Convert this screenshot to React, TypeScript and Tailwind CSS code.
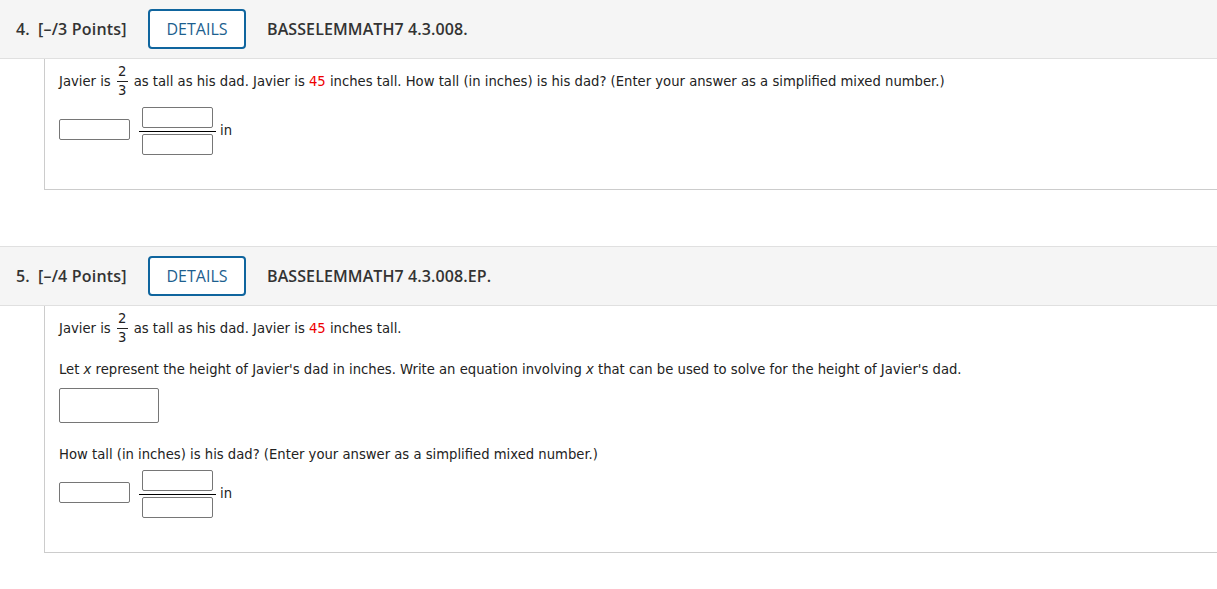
import React from 'react';

const body = { fontFamily: '"DejaVu Sans", Verdana, sans-serif' };
const head = { fontFamily: '"Open Sans", sans-serif' };

const Frac: React.FC<{ n: string; d: string }> = ({ n, d }) => (
  <span className="inline-flex flex-col items-center align-middle mx-[6px] leading-[14px]">
    <span className="pb-[2px]">{n}</span>
    <span className="w-[11px] border-t border-[#222]" />
    <span className="pt-[2px]">{d}</span>
  </span>
);

const Box: React.FC<{ className?: string }> = ({ className }) => (
  <div className={`border border-[#767676] rounded-[2px] bg-white ${className ?? ''}`} />
);

const MixedAnswer: React.FC = () => (
  <div className="flex items-start">
    <Box className="mt-[12px] w-[71px] h-[21px]" />
    <div className="ml-[9px] w-[77px] flex flex-col items-center">
      <Box className="w-[71px] h-[21px]" />
      <div className="w-full mt-[3px] mb-[2px] border-t border-black" />
      <Box className="w-[71px] h-[21px]" />
    </div>
    <span className="ml-[4px] mt-[17px] text-[13.2px] leading-[13px] text-[#222]">in</span>
  </div>
);

const Header: React.FC<{ num: string; pts: string; code: string; className?: string }> = ({ num, pts, code, className }) => (
  <div
    className={`h-[60px] bg-[#f5f5f5] border-y border-[#e0e0e0] flex items-center pl-[16px] text-[16px] text-[#333] ${className ?? ''}`}
    style={head}
  >
    <span className="font-semibold w-[22px]">{num}</span>
    <span className="font-semibold w-[89px] tracking-[0.2px]">{pts}</span>
    <button className="ml-[21px] w-[98px] h-[40px] border-2 border-[#0f659e] rounded-[4px] text-[#1d5f8f] bg-white">
      DETAILS
    </button>
    <span className="ml-[21px] font-semibold tracking-[0.1px]">{code}</span>
  </div>
);

const Javier: React.FC<{ rest: React.ReactNode }> = ({ rest }) => (
  <p className="flex items-center text-[#222]">
    <span>Javier is</span>
    <Frac n="2" d="3" />
    <span>
      as tall as his dad. Javier is <span className="text-[#e00]">45</span> inches tall.{rest}
    </span>
  </p>
);

export default function App() {
  return (
    <div className="w-[1217px] h-[589px] bg-white overflow-hidden text-[13.2px]" style={body}>
      <Header num="4." pts="[–/3 Points]" code="BASSELEMMATH7 4.3.008." className="-mt-px" />
      <div className="ml-[44px] h-[131px] border-l border-b border-[#ccc] pl-[14px] pt-[6px]">
        <Javier rest=" How tall (in inches) is his dad? (Enter your answer as a simplified mixed number.)" />
        <div className="mt-[9px]">
          <MixedAnswer />
        </div>
      </div>

      <Header num="5." pts="[–/4 Points]" code="BASSELEMMATH7 4.3.008.EP." className="mt-[56px]" />
      <div className="ml-[44px] h-[247px] border-l border-b border-[#ccc] pl-[14px] pt-[6px] text-[#222]">
        <Javier rest="" />
        <p className="mt-[17px] leading-[16px]">
          Let <i>x</i> represent the height of Javier's dad in inches. Write an equation involving <i>x</i> that can be used to solve for the height of Javier's dad.
        </p>
        <Box className="mt-[10px] w-[100px] h-[35px]" />
        <p className="mt-[24px] leading-[16px]">
          How tall (in inches) is his dad? (Enter your answer as a simplified mixed number.)
        </p>
        <div className="mt-[7px]">
          <MixedAnswer />
        </div>
      </div>
    </div>
  );
}
